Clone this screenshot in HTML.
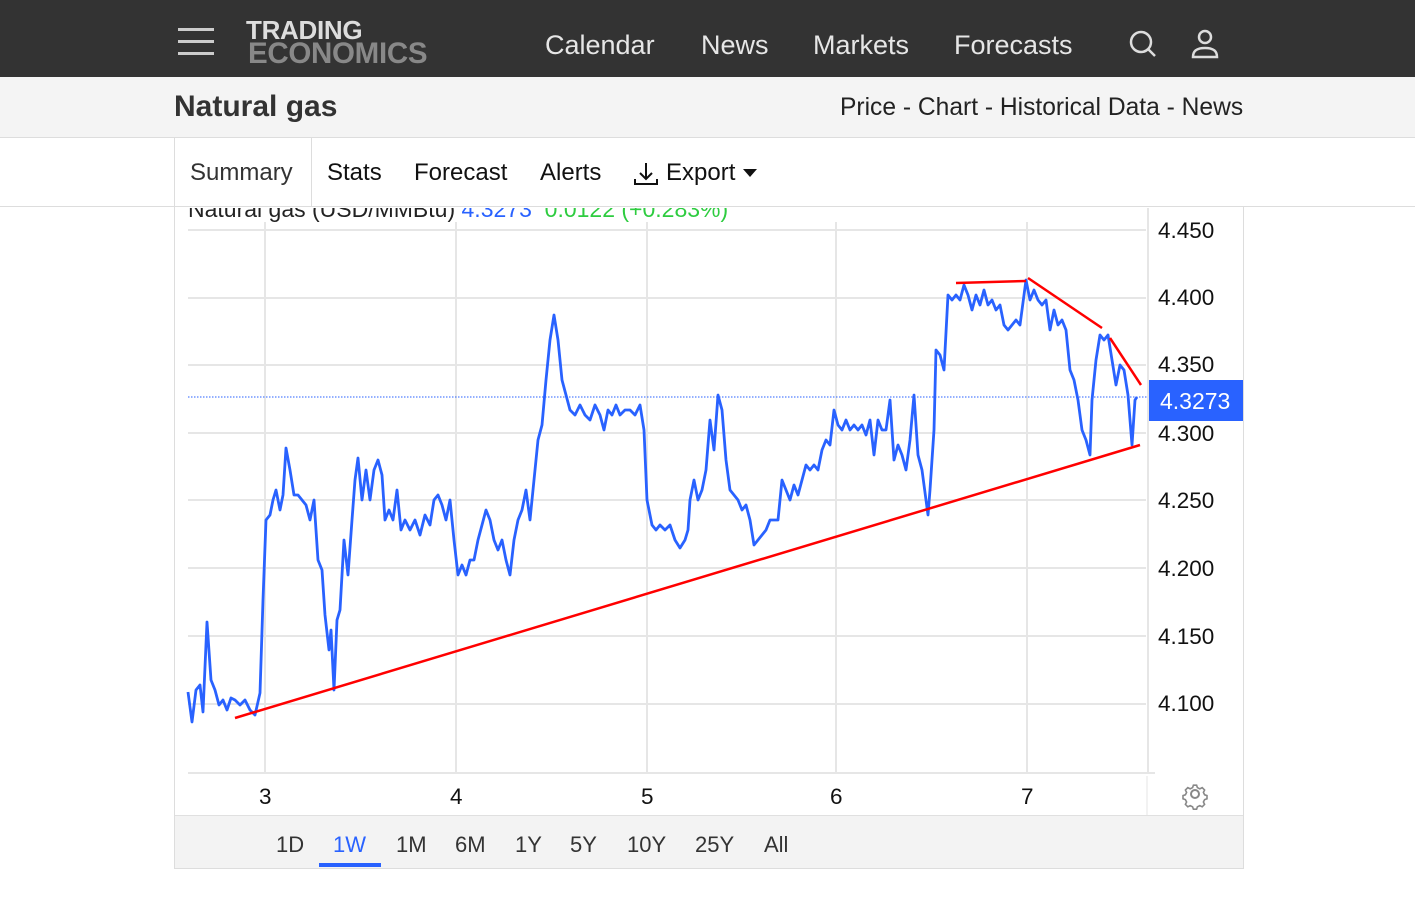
<!DOCTYPE html>
<html><head><meta charset="utf-8">
<style>
*{margin:0;padding:0;box-sizing:border-box}
body{width:1415px;height:901px;background:#fff;font-family:"Liberation Sans",Arial,sans-serif;position:relative;overflow:hidden}
.top{position:absolute;left:0;top:0;width:1415px;height:77px;background:#333}
.nav{position:absolute;top:30px;font-size:27px;color:#e6e6e6}
.sub{position:absolute;left:0;top:77px;width:1415px;height:61px;background:#f4f4f4;border-bottom:1px solid #ddd}
.tabs{position:absolute;left:0;top:138px;width:1415px;height:69px;border-bottom:1px solid #ddd}
.tab{position:absolute;top:159px;font-size:24px;color:#111}
.ax{position:absolute;font-size:22.5px;color:#111}
.rg{position:absolute;top:832px;font-size:22px;color:#333}
</style></head><body>
<div class="top">
  <div style="position:absolute;left:178px;top:28px;width:36px;height:3px;background:#ccc"></div>
  <div style="position:absolute;left:178px;top:40px;width:36px;height:3px;background:#ccc"></div>
  <div style="position:absolute;left:178px;top:52px;width:36px;height:3px;background:#ccc"></div>
  <div style="position:absolute;left:246px;top:18px;font-size:26px;font-weight:bold;color:#ddd;line-height:24px;letter-spacing:-0.3px">TRADING</div>
  <div style="position:absolute;left:248px;top:40px;font-size:29.5px;font-weight:bold;color:#888;line-height:28px;letter-spacing:-0.3px">ECONOMICS</div>
  <div class="nav" style="left:545px">Calendar</div>
  <div class="nav" style="left:701px">News</div>
  <div class="nav" style="left:813px">Markets</div>
  <div class="nav" style="left:954px">Forecasts</div>
  <svg style="position:absolute;left:1125px;top:27px" width="34" height="34" viewBox="0 0 34 34" fill="none" stroke="#ddd" stroke-width="2.5"><circle cx="16" cy="15" r="10"/><path d="M23 22l7 7"/></svg>
  <svg style="position:absolute;left:1188px;top:27px" width="34" height="34" viewBox="0 0 34 34" fill="none" stroke="#ddd" stroke-width="2.5"><circle cx="17" cy="10" r="6"/><path d="M5 30c0-7 5-9 12-9s12 2 12 9z"/></svg>
</div>
<div class="sub">
  <div style="position:absolute;left:174px;top:13px;font-size:30px;font-weight:bold;color:#333">Natural gas</div>
  <div style="position:absolute;left:840px;top:17px;font-size:24.6px;color:#222">Price - Chart - Historical Data - News</div>
</div>
<div class="tabs"></div>
<div style="position:absolute;left:174px;top:138px;width:1px;height:731px;background:#ddd"></div>
<div style="position:absolute;left:1243px;top:207px;width:1px;height:662px;background:#ddd"></div>
<div style="position:absolute;left:174px;top:868px;width:1070px;height:1px;background:#ddd"></div>
<div style="position:absolute;left:311px;top:138px;width:1px;height:69px;background:#ddd"></div>
<div class="tab" style="left:190px;color:#333">Summary</div>
<div class="tab" style="left:327px">Stats</div>
<div class="tab" style="left:414px">Forecast</div>
<div class="tab" style="left:540px">Alerts</div>
<svg style="position:absolute;left:632px;top:160px" width="28" height="28" viewBox="0 0 28 28" fill="none" stroke="#111" stroke-width="2"><path d="M14 3v16M8 13l6 6 6-6M3 19v5h22v-5"/></svg>
<div class="tab" style="left:666px">Export</div>
<svg style="position:absolute;left:743px;top:169px" width="14" height="8"><path d="M0 0h14L7 8z" fill="#111"/></svg>

<div style="position:absolute;left:188px;top:208px;height:14px;overflow:hidden;width:600px"><div style="font-size:23px;margin-top:-12px;white-space:nowrap;color:#222">Natural gas (USD/MMBtu) <span style="color:#2962ff">4.3273</span> &nbsp;<span style="color:#2ecc40">0.0122 (+0.283%)</span></div></div>

<svg style="position:absolute;left:0;top:0" width="1415" height="901">
<g stroke="#e6e6e6" stroke-width="2">
<line x1="188" y1="230" x2="1146" y2="230"/><line x1="188" y1="298" x2="1146" y2="298"/><line x1="188" y1="365" x2="1146" y2="365"/><line x1="188" y1="433" x2="1146" y2="433"/><line x1="188" y1="500" x2="1146" y2="500"/><line x1="188" y1="568" x2="1146" y2="568"/><line x1="188" y1="636" x2="1146" y2="636"/><line x1="188" y1="704" x2="1146" y2="704"/>
<line x1="188" y1="773" x2="1155" y2="773"/>
<line x1="265" y1="222" x2="265" y2="773"/><line x1="456" y1="222" x2="456" y2="773"/><line x1="647" y1="222" x2="647" y2="773"/><line x1="836" y1="222" x2="836" y2="773"/><line x1="1027" y1="222" x2="1027" y2="773"/>
<line x1="1148" y1="208" x2="1148" y2="773"/>
</g>
<line x1="1147" y1="776" x2="1147" y2="815" stroke="#e6e6e6" stroke-width="1"/>
<line x1="188" y1="397" x2="1148" y2="397" stroke="#2962ff" stroke-width="1" stroke-dasharray="1.5,1.5"/>
<polyline fill="none" stroke="#2962ff" stroke-width="2.8" stroke-linejoin="round" points="188,692 192,722 196,690 200,685 203,712 207,622 211,680 215,690 219,705 223,700 227,710 231,698 235,700 240,705 245,700 250,710 255,715 260,693 263,600 266,520 270,515 273,500 276,490 280,510 283,495 286,448 290,470 294,495 298,495 302,500 306,505 310,520 314,500 318,560 322,570 325,615 329,650 331,630 334,690 337,620 340,610 344,540 348,575 352,520 355,480 358,458 362,500 366,470 370,500 374,470 378,460 382,475 385,520 389,510 393,520 397,490 401,530 405,520 410,530 415,520 420,535 425,515 430,525 434,500 438,495 442,505 446,520 450,500 454,540 458,575 462,565 466,575 470,560 474,560 478,540 482,525 486,510 490,520 494,540 498,550 502,540 506,560 510,575 514,540 518,520 522,510 526,490 530,520 534,480 538,440 542,425 546,380 550,340 554,315 558,340 562,380 566,395 570,410 575,415 580,405 585,415 590,420 595,405 600,415 604,430 608,410 612,415 616,405 620,415 625,410 630,410 635,415 640,405 644,430 647,500 652,525 656,530 660,525 665,530 670,525 675,540 680,548 685,540 688,530 690,500 694,480 698,500 702,490 706,470 710,420 714,450 718,395 722,410 726,460 730,490 734,495 738,500 742,510 746,505 750,520 754,545 758,540 762,535 766,530 770,520 774,520 778,520 782,480 786,490 790,500 794,485 798,495 802,480 806,465 810,470 814,465 818,470 822,450 826,440 830,445 834,410 838,425 842,430 846,420 850,430 854,425 858,430 862,425 866,435 870,420 874,455 878,420 882,430 886,430 890,400 894,460 898,445 902,455 906,470 910,440 914,395 918,455 922,470 926,500 928,515 930,490 934,430 936,350 940,355 944,370 948,295 952,300 956,295 960,300 964,285 968,295 972,310 976,295 980,305 984,290 988,305 992,300 996,310 1000,305 1004,325 1008,330 1012,325 1016,320 1020,325 1024,295 1026,280 1030,300 1034,290 1038,300 1042,305 1046,300 1050,330 1054,310 1058,325 1062,320 1066,330 1070,370 1074,380 1078,400 1082,430 1086,440 1090,455 1092,400 1096,360 1100,335 1104,340 1108,335 1112,360 1116,385 1120,365 1124,370 1128,395 1132,445 1135,400 1137,397"/>
<g stroke="#ff0000" stroke-width="2.5">
<line x1="235" y1="718" x2="1140" y2="445"/>
<line x1="956" y1="283" x2="1026" y2="281"/>
<line x1="1028" y1="278" x2="1102" y2="328"/>
<line x1="1110" y1="338" x2="1141" y2="385"/>
</g>
<rect x="1149" y="380" width="94" height="41" fill="#2962ff"/>
<text x="1160" y="409" font-family="Liberation Sans, sans-serif" font-size="23" fill="#fff">4.3273</text>
<g transform="translate(1195,794)" fill="none" stroke="#888" stroke-width="2">
<circle r="4"/>
<path d="M-2,-11h4l1,3 3,1.5 3-1.5 3,3-1.5,3 1.5,3 3,1v4l-3,1-1.5,3 1.5,3-3,3-3-1.5-3,1.5-1,3h-4l-1-3-3-1.5-3,1.5-3-3 1.5-3-1.5-3-3-1v-4l3-1 1.5-3-1.5-3 3-3 3,1.5 3-1.5z" transform="scale(0.8)"/>
</g>
</svg>

<div class="ax" style="left:1158px;top:218px">4.450</div>
<div class="ax" style="left:1158px;top:285px">4.400</div>
<div class="ax" style="left:1158px;top:352px">4.350</div>
<div class="ax" style="left:1158px;top:421px">4.300</div>
<div class="ax" style="left:1158px;top:488px">4.250</div>
<div class="ax" style="left:1158px;top:556px">4.200</div>
<div class="ax" style="left:1158px;top:624px">4.150</div>
<div class="ax" style="left:1158px;top:691px">4.100</div>
<div class="ax" style="left:259px;top:784px">3</div>
<div class="ax" style="left:450px;top:784px">4</div>
<div class="ax" style="left:641px;top:784px">5</div>
<div class="ax" style="left:830px;top:784px">6</div>
<div class="ax" style="left:1021px;top:784px">7</div>

<div style="position:absolute;left:175px;top:815px;width:1068px;height:53px;background:#f3f3f3;border-top:1px solid #e0e0e0"></div>
<div class="rg" style="left:276px">1D</div>
<div class="rg" style="left:333px;color:#2962ff">1W</div>
<div style="position:absolute;left:319px;top:863px;width:62px;height:4px;background:#2962ff"></div>
<div class="rg" style="left:396px">1M</div>
<div class="rg" style="left:455px">6M</div>
<div class="rg" style="left:515px">1Y</div>
<div class="rg" style="left:570px">5Y</div>
<div class="rg" style="left:627px">10Y</div>
<div class="rg" style="left:695px">25Y</div>
<div class="rg" style="left:764px">All</div>
</body></html>
